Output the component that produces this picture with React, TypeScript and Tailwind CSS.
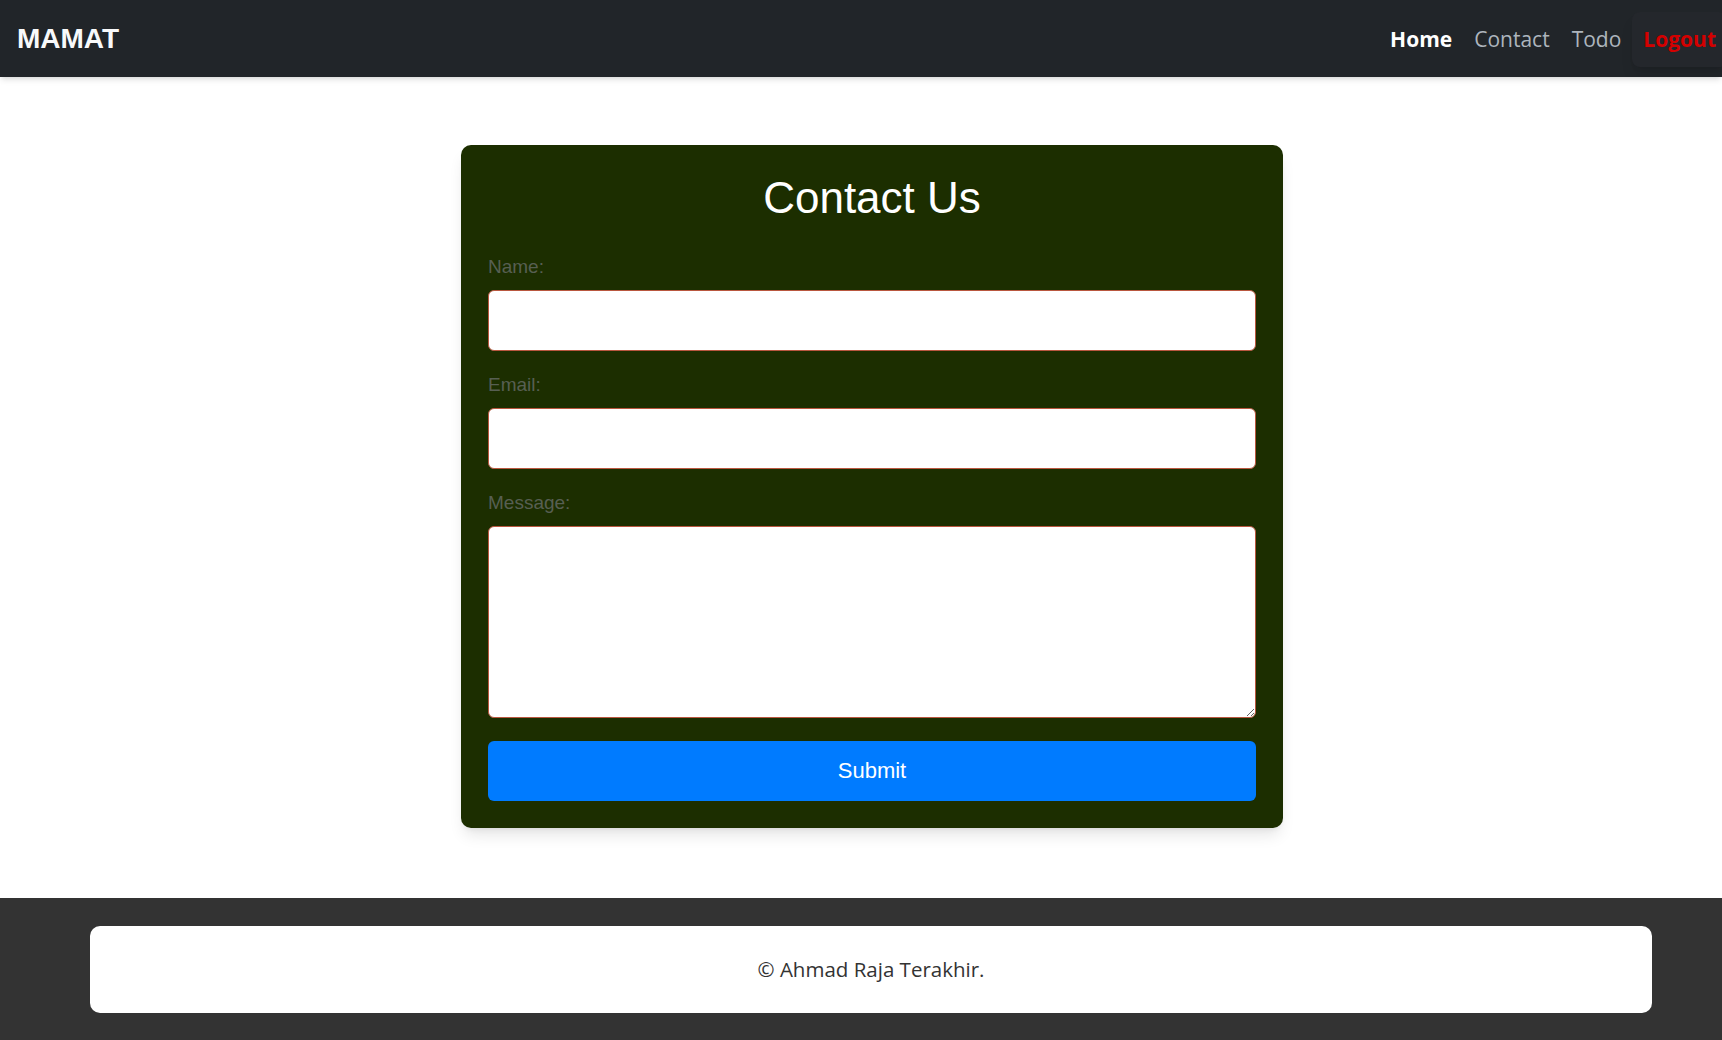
import React from "react";

const fieldClass =
  "block w-full rounded-[6px] border border-[#b9573f] bg-white px-3 text-[18px] text-gray-900 outline-none";

function Navbar() {
  return (
    <nav className="relative z-10 flex h-[77px] items-center justify-between bg-[#212529] pl-[17px] shadow-md overflow-hidden">
      <a href="#" className="font-['Liberation_Sans',Arial,sans-serif] text-[28px] font-bold text-[#f8f9fa]">
        MAMAT
      </a>
      <div className="mt-[2px] flex items-center font-['Open_Sans',sans-serif] text-[21px]">
        <a href="#" className="px-[11px] font-bold text-white">
          Home
        </a>
        <a href="#" className="px-[11px] text-[#adb5bd]">
          Contact
        </a>
        <a href="#" className="px-[11px] text-[#adb5bd]">
          Todo
        </a>
        <a
          href="#"
          className="mr-[-5px] rounded-lg bg-[#24272c] px-[11px] py-[12px] font-bold text-[#d40000] shadow-lg"
        >
          Logout
        </a>
      </div>
    </nav>
  );
}

function ContactForm() {
  return (
    <div className="w-[822px] rounded-[10px] bg-[#1c2e00] px-[27px] pt-[27px] pb-[27px] shadow-lg font-['Liberation_Sans',Arial,sans-serif]">
      <h2 className="mb-[31px] text-center text-[44px] leading-[1.2] text-white">Contact Us</h2>
      <form className="flex flex-col">
        <label className="mb-[12px] block text-[19px] leading-[22px] text-[#575f52]">Name:</label>
        <input type="text" className={`${fieldClass} h-[61px]`} />
        <label className="mt-[23px] mb-[12px] block text-[19px] leading-[22px] text-[#575f52]">Email:</label>
        <input type="email" className={`${fieldClass} h-[61px]`} />
        <label className="mt-[23px] mb-[12px] block text-[19px] leading-[22px] text-[#575f52]">Message:</label>
        <textarea className={`${fieldClass} h-[192px] py-2`} />
        <button
          type="button"
          className="mt-[23px] h-[60px] w-full rounded-[6px] bg-[#007bff] text-[22px] text-white"
        >
          Submit
        </button>
      </form>
    </div>
  );
}

export default function App() {
  return (
    <div className="min-h-screen bg-white">
      <Navbar />
      <main className="flex justify-center pl-[22px] pt-[68px] pb-[70px]">
        <ContactForm />
      </main>
      <footer className="bg-[#333333] pl-[90px] pr-[70px] pt-[28px] pb-[27px]">
        <div className="flex h-[87px] items-center justify-center rounded-[10px] bg-white font-['Open_Sans',sans-serif] text-[20.5px] text-[#333333]">
          © Ahmad Raja Terakhir.
        </div>
      </footer>
    </div>
  );
}
